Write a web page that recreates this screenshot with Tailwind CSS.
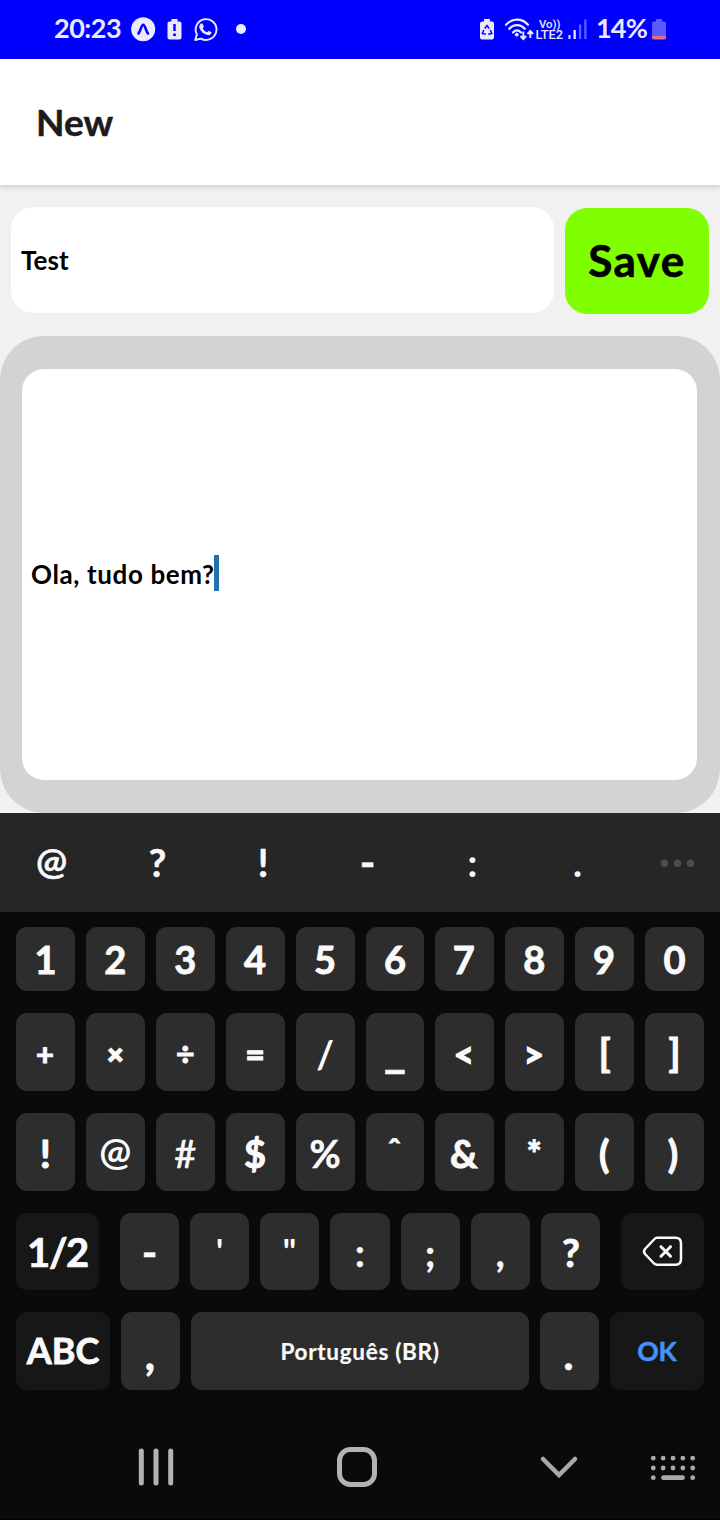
<!DOCTYPE html>
<html lang="pt-BR">
<head>
<meta charset="utf-8">
<title>New</title>
<script src="https://cdn.jsdelivr.net/npm/@tailwindcss/browser@4"></script>
</head>
<body class="w-[720px] h-[1520px] overflow-hidden bg-[#f1f1f1] font-['Lato','Open_Sans',sans-serif] font-bold flex flex-col">

<!-- Status bar -->
<header class="h-[59px] shrink-0 bg-[#0000ff] text-[#ebe9ff] flex pl-[54px] pr-[52px]">
  <span class="w-[77px] text-[27px] leading-[56px] tracking-[-0.5px] whitespace-nowrap">20:23</span>
  <svg class="w-[120px] h-[59px]" viewBox="131 0 120 59" fill="currentColor">
    <circle cx="143.200" cy="29.200" r="12"/>
    <path d="M138.500 33.500C140.500 31 141.500 24.800 143.200 24.800S146 31 148 33.500" fill="none" stroke="#0000ff" stroke-width="2.600" stroke-linecap="round"/>
    <path d="M171.500 19h6v2.500h2a2 2 0 0 1 2 2V37.500a2 2 0 0 1-2 2h-10a2 2 0 0 1-2-2V23.500a2 2 0 0 1 2-2h2z"/>
    <path d="M174.500 24v7" stroke="#0000ff" stroke-width="2.400"/><circle cx="174.500" cy="34.700" r="1.500" fill="#0000ff"/>
    <path d="M195.200 40l1.700-5.600A10.400 10.400 0 1 1 201 38.600z" fill="none" stroke="currentColor" stroke-width="1.900" stroke-linejoin="round"/>
    <path d="M201.600 23.600c.7 0 .9 0 1.200.7l1 2.300c.2.500-1.100 1.600-1 1.900.9 1.700 2.200 3 4 3.700.4.100 1.500-1.500 1.900-1.300l2.500 1.200c.4.200.3.500.2 1-.4 1.700-2.400 2.400-4 2-3.900-.9-6.800-3.700-8-7-.6-2 .7-4.500 2.200-4.500z"/>
    <circle cx="241" cy="29" r="5"/>
  </svg>
  <span class="grow"></span>
  <svg class="w-[118px] h-[59px]" viewBox="476 0 118 59" fill="currentColor">
    <path d="M484 19h6v2.500h2a2 2 0 0 1 2 2V37.500a2 2 0 0 1-2 2h-10a2 2 0 0 1-2-2V23.500a2 2 0 0 1 2-2h2z"/>
    <path d="M484.800 28.500l2.200-3 2.200 3M490.300 30l1.500 3.400-3.600.8M485.800 34.200l-3.500-.8 1.500-3.400" fill="none" stroke="#0000ff" stroke-width="1.500"/>
    <g fill="none" stroke="currentColor" stroke-width="2.200" stroke-linecap="round">
      <path d="M506 24.800C512 18 522 18 528 24.800"/><path d="M509.300 28.800C513.500 23.800 520.500 23.800 524.700 28.800"/><path d="M513 32.400C515.500 29.700 518.500 29.700 521 32.400"/>
    </g>
    <circle cx="516.800" cy="34.600" r="1.900"/>
    <path d="M523.300 31.500v7M520.500 36l2.800 3 2.800-3M530.300 38v-6.500M527.500 34l2.800-3 2.800 3" fill="none" stroke="currentColor" stroke-width="1.900"/>
    <text x="539" y="27.500" font-family="Roboto" font-size="11.500" font-weight="500" textLength="21.500" lengthAdjust="spacingAndGlyphs">Vo))</text>
    <text x="535.500" y="39" font-family="Roboto" font-size="12" font-weight="500" textLength="27.500" lengthAdjust="spacingAndGlyphs">LTE2</text>
    <path d="M568.500 35h2v4h-2zM573.500 30h2.300v9h-2.300z"/>
    <path d="M579 24.500h2.200V39H579zM584.300 19.500h2.200V39h-2.200z" fill="#6361ff"/>
  </svg>
  <span class="w-[57px] pl-[2px] text-[27px] leading-[56px] tracking-[-0.8px] whitespace-nowrap">14%</span>
  <svg class="w-[17px] h-[59px]" viewBox="651 0 17 59">
    <path d="M656 19h6v2.500h2a2 2 0 0 1 2 2V36h-14V23.500a2 2 0 0 1 2-2h2z" fill="#5c59ff"/>
    <path d="M652 36h14v1.500a2 2 0 0 1-2 2h-10a2 2 0 0 1-2-2z" fill="#e0707f"/>
  </svg>
</header>

<!-- Title bar -->
<div class="h-[126px] shrink-0 bg-white pl-[36px] text-[#1c1c1e] text-[37px] leading-[125px] [-webkit-text-stroke:0.5px] shadow-[0_1px_7px_rgba(0,0,0,0.2)]">New</div>

<!-- Note heading and save button -->
<div class="h-[151px] shrink-0 flex gap-[11px] pl-[11px] pr-[11px] pt-[22px]">
  <div class="w-[543px] h-[106px] rounded-[22px] bg-white pl-[10px] text-black text-[26px] leading-[106px] tracking-[0.1px]">Test</div>
  <div class="w-[144px] h-[106px] mt-px rounded-[22px] bg-[#80ff00] text-black text-[44px] leading-[105px] tracking-[1.4px] [-webkit-text-stroke:0.6px] text-center">Save</div>
</div>

<!-- Note body -->
<div class="h-[477px] shrink-0 rounded-[44px] bg-[#d3d3d3] pt-[33px] pl-[22px]">
  <div class="w-[675px] h-[411px] rounded-[22px] bg-white pl-[9px] flex items-center">
    <span class="text-black text-[26px] tracking-[0.62px] whitespace-nowrap">Ola, tudo bem?</span><span class="w-[5px] h-9 bg-[#2271ac] -ml-px -mt-[3px]"></span>
  </div>
</div>

<!-- Keyboard -->
<div class="grow bg-[#0a0a0a] text-[#fafafa] [-webkit-text-stroke:0.5px]">
  <div class="h-[99px] bg-[#262626] flex text-[38px] leading-[98px] text-center">
    <span class="w-[103px] text-[37px] leading-[95px] [-webkit-text-stroke:0.4px]">@</span><span class="w-[109px]">?</span><span class="w-[102px]">!</span><span class="w-[107px] text-[42px]">-</span><span class="w-[103px] [-webkit-text-stroke:0px]">:</span><span class="w-[107px] [-webkit-text-stroke:0px]">.</span>
    <svg class="w-[89px] h-[99px]" viewBox="631 813 89 99" fill="#4d4d4d"><circle cx="664.500" cy="863.300" r="3.700"/><circle cx="677.500" cy="863.300" r="3.700"/><circle cx="690.500" cy="863.300" r="3.700"/></svg>
  </div>

  <div class="px-4 pt-[15px] flex flex-col gap-[22px] text-center">
    <div class="grid grid-cols-10 grid-rows-1 gap-[11px] h-16 text-[38px] leading-[65px] [-webkit-text-stroke:0.9px]">
      <div class="rounded-[11px] bg-[#2d2d2d]">1</div><div class="rounded-[11px] bg-[#2d2d2d]">2</div><div class="rounded-[11px] bg-[#2d2d2d]">3</div><div class="rounded-[11px] bg-[#2d2d2d]">4</div><div class="rounded-[11px] bg-[#2d2d2d]">5</div><div class="rounded-[11px] bg-[#2d2d2d]">6</div><div class="rounded-[11px] bg-[#2d2d2d] pr-0.5">7</div><div class="rounded-[11px] bg-[#2d2d2d] pr-px">8</div><div class="rounded-[11px] bg-[#2d2d2d] pr-px">9</div><div class="rounded-[11px] bg-[#2d2d2d]">0</div>
    </div>
    <div class="grid grid-cols-10 grid-rows-1 gap-[11px] h-[78px] text-[34px] leading-[82px] [-webkit-text-stroke:1px]">
      <div class="rounded-[11px] bg-[#2d2d2d] text-[31px] pr-px">+</div><div class="rounded-[11px] bg-[#2d2d2d] text-[27px] leading-[81px] [-webkit-text-stroke:2px]">×</div><div class="rounded-[11px] bg-[#2d2d2d] text-[32px]">÷</div><div class="rounded-[11px] bg-[#2d2d2d]">=</div><div class="rounded-[11px] bg-[#2d2d2d] text-[38px] leading-[80px] [-webkit-text-stroke:0px]">/</div><div class="rounded-[11px] bg-[#2d2d2d] text-[48px] leading-[72px] [-webkit-text-stroke:0.6px]">_</div><div class="rounded-[11px] bg-[#2d2d2d] [-webkit-text-stroke:1.6px] pr-0.5">&lt;</div><div class="rounded-[11px] bg-[#2d2d2d] [-webkit-text-stroke:1.6px] pr-0.5">&gt;</div><div class="rounded-[11px] bg-[#2d2d2d] text-[38px] leading-[79px] [-webkit-text-stroke:1.1px]">[</div><div class="rounded-[11px] bg-[#2d2d2d] text-[38px] leading-[79px] [-webkit-text-stroke:1.1px]">]</div>
    </div>
    <div class="grid grid-cols-10 grid-rows-1 gap-[11px] h-[78px] text-[38px] leading-[80px]">
      <div class="rounded-[11px] bg-[#2d2d2d] [-webkit-text-stroke:1.2px]">!</div><div class="rounded-[11px] bg-[#2d2d2d] leading-[75px] [-webkit-text-stroke:0px]">@</div><div class="rounded-[11px] bg-[#2d2d2d] font-normal [-webkit-text-stroke:0.6px]">#</div><div class="rounded-[11px] bg-[#2d2d2d] [-webkit-text-stroke:1px]">$</div><div class="rounded-[11px] bg-[#2d2d2d]">%</div><div class="rounded-[11px] bg-[#2d2d2d] text-[31px] leading-[72px] pr-px [-webkit-text-stroke:0.8px]">ˆ</div><div class="rounded-[11px] bg-[#2d2d2d] [-webkit-text-stroke:1px] pr-0.5">&amp;</div><div class="rounded-[11px] bg-[#2d2d2d] text-[36px] pr-px [-webkit-text-stroke:1px]">*</div><div class="rounded-[11px] bg-[#2d2d2d] [-webkit-text-stroke:1px] pr-px">(</div><div class="rounded-[11px] bg-[#2d2d2d] [-webkit-text-stroke:1px] pr-[3px]">)</div>
    </div>
    <div class="flex gap-[21px] h-[77px] text-[38px] leading-[79px]">
      <div class="w-[83px] rounded-[11px] bg-[#171717] text-[40px] leading-[79px] tracking-[-1.4px] [-webkit-text-stroke:0.7px]">1/2</div>
      <div class="w-[480px] grid grid-cols-7 grid-rows-1 gap-[11px]">
        <div class="rounded-[11px] bg-[#2d2d2d] text-[42px]">-</div><div class="rounded-[11px] bg-[#2d2d2d] text-[34px] leading-[75px] [-webkit-text-stroke:0px]">'</div><div class="rounded-[11px] bg-[#2d2d2d] text-[34px] leading-[75px] pr-px [-webkit-text-stroke:0px]">"</div><div class="rounded-[11px] bg-[#2d2d2d]">:</div><div class="rounded-[11px] bg-[#2d2d2d]">;</div><div class="rounded-[11px] bg-[#2d2d2d]">,</div><div class="rounded-[11px] bg-[#2d2d2d] [-webkit-text-stroke:1px] pl-px">?</div>
      </div>
      <div class="w-[83px] rounded-[11px] bg-[#171717]">
        <svg class="w-[83px] h-[77px]" viewBox="621 1213 83 77" fill="none" stroke="currentColor" stroke-width="2.500" stroke-linejoin="round" stroke-linecap="round"><path d="M657 1237.800H675.500Q681 1237.800 681 1243.300V1259.200Q681 1264.700 675.500 1264.700H657Q655.500 1264.700 654 1263.500L645 1254Q643 1251.500 645 1249L654 1239.500Q655.500 1237.800 657 1237.800Z"/><path d="M661 1246.700L670.500 1256.200M670.500 1246.700L661 1256.200" stroke-width="3"/></svg>
      </div>
    </div>
    <div class="flex gap-[11px] h-[78px] text-[44px] leading-[82px]">
      <div class="w-[94px] rounded-[11px] bg-[#171717] text-[36px] leading-[77px] [-webkit-text-stroke:0.8px]">ABC</div>
      <div class="w-[59px] rounded-[11px] bg-[#2d2d2d] pr-px [-webkit-text-stroke:0.8px]">,</div>
      <div class="w-[338px] rounded-[11px] bg-[#2d2d2d] text-[22.5px] leading-[80px] tracking-[0.7px] [-webkit-text-stroke:0.2px]">Português (BR)</div>
      <div class="w-[59px] rounded-[11px] bg-[#2d2d2d] pr-0.5">.</div>
      <div class="w-[94px] rounded-[11px] bg-[#171717] text-[#4591f5] text-[26.5px] leading-[79px]">OK</div>
    </div>
  </div>

  <!-- Navigation bar -->
  <svg class="w-[720px] h-[130px]" viewBox="0 1390 720 130" fill="none" stroke="#b2b2b2" stroke-width="5" stroke-linecap="round">
    <path d="M141.300 1451V1483M156 1451V1483M170.700 1451V1483"/>
    <rect x="339.500" y="1449.500" width="35" height="35" rx="11"/>
    <path d="M543 1459L559 1475L575 1459" stroke-width="4.500" stroke="#a9a9a9"/>
    <g stroke="#a9a9a9" stroke-width="4.800"><path d="M653.300 1458.200H693" stroke-dasharray="0 9.850"/><path d="M653.300 1468H693" stroke-dasharray="0 9.850"/><path d="M653.300 1477.700h0M663.500 1477.700H682.500M692.700 1477.700h0"/></g>
    <path d="M0 1519.500H720" stroke="#000" stroke-width="1"/>
  </svg>
</div>
</body>
</html>
